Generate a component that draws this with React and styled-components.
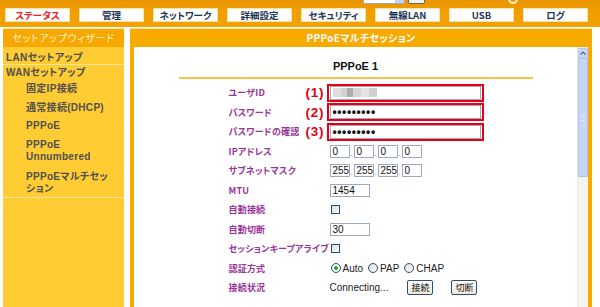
import styled, { createGlobalStyle } from "styled-components";

const GlobalStyle = createGlobalStyle`
  body {
    margin: 0;
    background: #fff;
    font-family: "Noto Sans CJK JP", "Liberation Sans", sans-serif;
  }
`;

const tabs = ["ステータス", "管理", "ネットワーク", "詳細設定", "セキュリティ", "無線LAN", "USB", "ログ"];

const menu = [
  { label: "LANセットアップ", level: 0, pad: "5px 8px 0", line: true },
  { label: "WANセットアップ", level: 0, pad: "2px 8px 0" },
  { label: "固定IP接続", level: 1, pad: "4px 8px 3px" },
  { label: "通常接続(DHCP)", level: 1, pad: "4px 8px 2px" },
  { label: "PPPoE", level: 1, pad: "4px 8px 2px" },
  { label: ["PPPoE", "Unnumbered"], level: 1, pad: "5px 8px 3px" },
  { label: "PPPoEマルチセッション", level: 1, pad: "5px 8px 2px", line: true },
];

const Page = styled.div`
  width: 600px;
  height: 307px;
  overflow: hidden;
  display: flex;
  flex-direction: column;
`;

const Header = styled.header`
  height: 27px;
  flex-shrink: 0;
  background: linear-gradient(180deg, #e89400 0%, #f09e00 40%, #f2a300 100%);
  display: flex;
  flex-direction: column;
`;

const TopStrip = styled.div`
  height: 4px;
  overflow: hidden;
  display: flex;
  align-items: flex-end;
  padding-left: 363px;
  gap: 3px;
`;

const LangSelect = styled.div`
  width: 42px;
  height: 8px;
  background: #fff;
  border: 1px solid #9aa8c0;
  box-sizing: border-box;
  display: flex;
  justify-content: flex-end;
  &::after {
    content: "";
    width: 9px;
    background: #c4d3f5;
  }
`;

const SmallButton = styled.div`
  width: 17px;
  height: 8px;
  border: 1px solid #666;
  border-radius: 2px;
  background: #f3f2ec;
  box-sizing: border-box;
`;

const Ring = styled.div`
  width: 10px;
  height: 10px;
  margin-left: 80px;
  border: 2px solid #fff3d0;
  border-radius: 50%;
  box-sizing: border-box;
`;

const Tabs = styled.nav`
  margin-top: 4px;
  padding-left: 5px;
  display: flex;
  gap: 9px;
`;

const Tab = styled.div`
  width: 65px;
  height: 14px;
  box-sizing: border-box;
  background: #fff;
  border: 1px solid #fbe2a4;
  font-size: 9.5px;
  font-weight: bold;
  line-height: 12px;
  text-align: center;
  color: ${(p) => (p.$active ? "#e8202a" : "#1e3656")};
  font-feature-settings: "palt";
`;

const Main = styled.div`
  flex: 1;
  display: flex;
  gap: 6px;
  padding: 1px 0 0 3px;
  min-height: 0;
`;

const Sidebar = styled.aside`
  width: 121px;
  flex-shrink: 0;
  background: #ffcc33;
  border-top: 1px solid #fde3a6;
  font-feature-settings: "palt";
`;

const SideHeader = styled.div`
  height: 18px;
  background: #f6a800;
  color: #fff2c4;
  font-size: 10px;
  line-height: 18px;
  text-align: center;
  letter-spacing: 0.6px;
`;

const SideItem = styled.div`
  padding: ${(p) => p.$pad};
  padding-left: ${(p) => (p.$level ? 23 : 3)}px;
  font-family: "Liberation Sans", "Noto Sans CJK JP", sans-serif;
  font-size: 10px;
  font-weight: bold;
  line-height: 12px;
  color: #505050;
  letter-spacing: 0.3px;
  border-bottom: ${(p) => (p.$line ? "1px solid #ffe69a" : "none")};
`;

const Panel = styled.section`
  width: 462px;
  flex-shrink: 0;
  background: #f7aa00;
  border-top: 1px solid #fde3a6;
  display: flex;
  flex-direction: column;
`;

const PanelTitle = styled.div`
  height: 18px;
  line-height: 18px;
  text-align: center;
  color: #fff;
  font-size: 10px;
  font-weight: bold;
  font-feature-settings: "palt";
  letter-spacing: 0.3px;
`;

const PanelBody = styled.div`
  flex: 1;
  margin: 0 4px;
  background: #fff;
  display: flex;
  min-height: 0;
`;

const Content = styled.div`
  flex: 1;
`;

const FormTitle = styled.div`
  padding: 12px 0 4px;
  line-height: 14px;
  text-align: center;
  font-family: "Liberation Sans", sans-serif;
  font-size: 11px;
  font-weight: bold;
  color: #111;
`;

const Form = styled.div`
  width: 354px;
  margin: 0 auto;
  border-top: 2px solid #fcc04a;
  padding-top: 4px;
`;

const Row = styled.div`
  height: 19.5px;
  display: grid;
  grid-template-columns: 50px 78px 20px 1fr;
  align-items: center;
`;

const Label = styled.div`
  grid-column: 2;
  font-size: 9px;
  font-weight: bold;
  color: #993399;
  white-space: nowrap;
  font-feature-settings: "palt";
  letter-spacing: 0.2px;
`;

const Num = styled.div`
  font-family: "Liberation Sans", sans-serif;
  font-size: 13.5px;
  font-weight: bold;
  color: #e60012;
  letter-spacing: 0.8px;
  margin-left: -1px;
`;

const Cell = styled.div`
  grid-column: 4;
  display: flex;
  align-items: center;
  padding-left: ${(p) => (p.$flush ? 0 : 3)}px;
  font-family: "Liberation Sans", sans-serif;
  font-size: 10px;
  color: #222;
`;

const RedBox = styled.div`
  width: 157px;
  height: 18px;
  box-sizing: border-box;
  border: 2px solid #e60012;
  padding: 0 1px;
  display: flex;
`;

const TextBox = styled.div`
  width: ${(p) => p.$w}px;
  height: ${(p) => p.$h || 13}px;
  box-sizing: border-box;
  border: 1px solid #a0a9c4;
  background: #fff;
  padding-left: 2px;
  display: flex;
  align-items: center;
  font-family: "Liberation Sans", sans-serif;
  font-size: 10px;
  color: #111;
  flex: ${(p) => (p.$w ? "none" : 1)};
`;

const Blurred = styled.span`
  width: 44px;
  height: 9px;
  background: linear-gradient(
    90deg,
    #dedede 0 8px,
    #d2d2d2 8px 14px,
    #adadad 14px 20px,
    #d6d6d6 20px 28px,
    #e4e4e4 28px 36px,
    #d0d0d0 36px 44px
  );
`;

const Dots = styled.span`
  font-size: 12px;
  font-weight: bold;
  letter-spacing: 0.6px;
  line-height: 10px;
`;

const Sep = styled.span`
  width: 4px;
  align-self: flex-end;
  font-size: 8px;
  line-height: 8px;
  text-align: center;
  color: #555;
`;

const Check = styled.span`
  width: 9px;
  height: 9px;
  box-sizing: border-box;
  margin-left: 1px;
  border: 1px solid #2a4e7e;
  background: linear-gradient(135deg, #dcdcd6, #fbfbf9);
`;

const Radio = styled.span`
  width: 10px;
  height: 10px;
  box-sizing: border-box;
  margin: 0 2px 0 ${(p) => (p.$first ? 1 : 5)}px;
  border: 1px solid #2a4e7e;
  border-radius: 50%;
  background: ${(p) =>
    p.$on
      ? "radial-gradient(circle, #28b428 0 1.8px, #f4f4f0 2.2px)"
      : "linear-gradient(135deg, #dcdcd6, #fbfbf9)"};
`;

const Btn = styled.span`
  height: 15px;
  box-sizing: border-box;
  padding: 0 3px;
  margin-left: ${(p) => p.$gap}px;
  border: 1px solid #2c4f78;
  border-radius: 2px;
  background: linear-gradient(180deg, #ffffff, #ece9d8);
  font-family: "Noto Sans CJK JP", sans-serif;
  font-size: 9px;
  line-height: 13px;
  color: #111;
`;

const Scrollbar = styled.div`
  width: 10px;
  background: #f4f3ee;
  border-left: 1px solid #ebeae4;
  display: flex;
  flex-direction: column;
`;

const ScrollArrow = styled.div`
  height: 10px;
  margin-top: 1px;
  background: #c8d6f7;
  border: 1px solid #b6c8ee;
  border-radius: 1px;
  box-sizing: border-box;
  display: flex;
  justify-content: center;
  align-items: center;
`;

const Thumb = styled.div`
  height: 119px;
  background: #c6d5f8;
  border: 1px solid #b2c4ec;
  box-sizing: border-box;
  display: flex;
  align-items: center;
  justify-content: center;
  &::after {
    content: "";
    width: 4px;
    height: 4px;
    border-top: 1px solid #e8eefc;
    border-bottom: 1px solid #e8eefc;
  }
`;

const TextRow = ({ label, num, children }) => (
  <Row>
    <Label>{label}</Label>
    {num && <Num>({num})</Num>}
    <Cell $flush={!!num}>{children}</Cell>
  </Row>
);

const Octets = ({ values }) =>
  values.map((v, i) => (
    <span key={i} style={{ display: "contents" }}>
      {i > 0 && <Sep>.</Sep>}
      <TextBox $w={20}>{v}</TextBox>
    </span>
  ));

export default function App() {
  return (
    <Page>
      <GlobalStyle />
      <Header>
        <TopStrip>
          <LangSelect />
          <SmallButton />
          <Ring />
        </TopStrip>
        <Tabs>
          {tabs.map((t, i) => (
            <Tab key={t} $active={i === 0}>
              {t}
            </Tab>
          ))}
        </Tabs>
      </Header>
      <Main>
        <Sidebar>
          <SideHeader>セットアップウィザード</SideHeader>
          {menu.map((m, i) => (
            <SideItem key={i} $level={m.level} $pad={m.pad} $line={m.line}>
              {Array.isArray(m.label) ? (
                <>
                  {m.label[0]}
                  <br />
                  {m.label[1]}
                </>
              ) : (
                m.label
              )}
            </SideItem>
          ))}
        </Sidebar>
        <Panel>
          <PanelTitle>PPPoEマルチセッション</PanelTitle>
          <PanelBody>
            <Content>
              <FormTitle>PPPoE 1</FormTitle>
              <Form>
                <TextRow label="ユーザID" num="1">
                  <RedBox>
                    <TextBox $h={14}>
                      <Blurred />
                    </TextBox>
                  </RedBox>
                </TextRow>
                <TextRow label="パスワード" num="2">
                  <RedBox>
                    <TextBox $h={14}>
                      <Dots>•••••••••</Dots>
                    </TextBox>
                  </RedBox>
                </TextRow>
                <TextRow label="パスワードの確認" num="3">
                  <RedBox>
                    <TextBox $h={14}>
                      <Dots>•••••••••</Dots>
                    </TextBox>
                  </RedBox>
                </TextRow>
                <TextRow label="IPアドレス">
                  <Octets values={["0", "0", "0", "0"]} />
                </TextRow>
                <TextRow label="サブネットマスク">
                  <Octets values={["255", "255", "255", "0"]} />
                </TextRow>
                <TextRow label="MTU">
                  <TextBox $w={40}>1454</TextBox>
                </TextRow>
                <TextRow label="自動接続">
                  <Check />
                </TextRow>
                <TextRow label="自動切断">
                  <TextBox $w={40}>30</TextBox>
                </TextRow>
                <TextRow label="セッションキープアライブ">
                  <Check />
                </TextRow>
                <TextRow label="認証方式">
                  <Radio $on $first />
                  Auto
                  <Radio />
                  PAP
                  <Radio />
                  CHAP
                </TextRow>
                <TextRow label="接続状況">
                  Connecting...
                  <Btn $gap={19}>接続</Btn>
                  <Btn $gap={18}>切断</Btn>
                </TextRow>
              </Form>
            </Content>
            <Scrollbar>
              <ScrollArrow>
                <svg width="6" height="4" viewBox="0 0 6 4">
                  <path d="M0.5 3.5 L3 1 L5.5 3.5" fill="none" stroke="#4d6185" strokeWidth="1.2" />
                </svg>
              </ScrollArrow>
              <Thumb />
            </Scrollbar>
          </PanelBody>
        </Panel>
      </Main>
    </Page>
  );
}
